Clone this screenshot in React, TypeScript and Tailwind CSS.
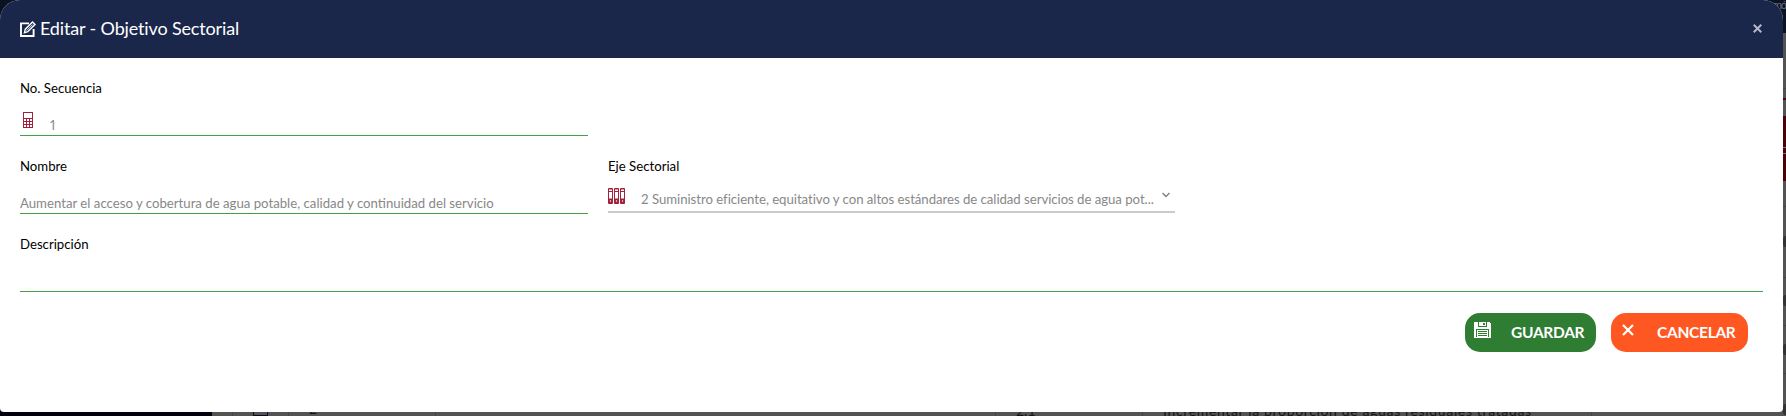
import { ReactNode } from "react";

function EditIcon() {
  return (
    <svg className="block h-4 w-4 shrink-0" viewBox="0 0 16 16" fill="none" stroke="#fff">
      <path d="M9 2.4H1V15h12.6V8" strokeWidth="1.9" />
      <path d="M4.4 11.8l.9-3.6 7.2-7.2 2.5 2.5-7.2 7.2z" strokeWidth="1.4" />
      <path d="M6.6 9.6l6-6" strokeWidth=".9" />
    </svg>
  );
}

function CalculatorIcon() {
  return (
    <svg className="block h-4 w-[10px]" viewBox="0 0 10 16" fill="none" stroke="#a3203c" shapeRendering="crispEdges">
      <rect x=".5" y=".5" width="9" height="15" />
      <path d="M0 6.5h10M0 9.5h10M0 12.5h10M3.5 6.5v9M6.5 6.5v9" />
    </svg>
  );
}

function BindersIcon() {
  return (
    <svg className="block h-4 w-[17px]" viewBox="0 0 17 16" fill="none" stroke="#a3203c">
      {[0, 6, 12].map((x) => (
        <g key={x}>
          <rect x={x + 0.5} y=".5" width="4" height="15" rx=".5" />
          <path d={`M${x} 1h5M${x} 3.5h5`} strokeWidth="1.2" />
          <path d={`M${x} 10.5h5v5h-5z`} fill="#a3203c" stroke="none" />
          <circle cx={x + 2.5} cy="13" r=".7" fill="#fff" stroke="none" />
        </g>
      ))}
    </svg>
  );
}

function SaveIcon() {
  return (
    <svg className="block h-4 w-[17px]" viewBox="0 0 17 16" shapeRendering="crispEdges">
      <path d="M0 0h15l2 2v14H0z" fill="#fff" />
      <path d="M4 0h1v5H4zM12 0h1v5h-1zM4 4h9v1H4zM9 1h2v2H9z" fill="#2e7d32" />
      <path d="M2 7h13v8H2z" fill="#2e7d32" />
      <path d="M3 8h11v7H3z" fill="#fff" />
      <path d="M4 9.5h9M4 11.5h9M4 13.5h9" stroke="#2e7d32" />
    </svg>
  );
}

function Cross({ className, width }: { className: string; width: number }) {
  return (
    <svg className={className} viewBox="0 0 12 12" fill="none" stroke="currentColor" strokeWidth={width}>
      <path d="M1 1l10 10M11 1L1 11" />
    </svg>
  );
}

function Label({ children }: { children: ReactNode }) {
  return <div className="h-5 text-[13.2px] leading-5 text-black">{children}</div>;
}

function Backdrop() {
  return (
    <div className="absolute inset-0 bg-[#535353] text-[14px] text-[#161616]">
      <div className="absolute left-0 top-0 h-[33px] w-full bg-[#0b1224]" />
      <div className="absolute left-[1773px] top-[-3px] text-[11px] leading-4 tracking-[-1.4px] text-[#6b7078]">mó</div>
      <div className="absolute right-0 top-[98px] h-[2px] w-[3px] bg-[#530014]" />
      <div className="absolute right-0 top-[116px] h-[65px] w-[3px] bg-[#4d0008]" />
      <div className="absolute right-0 top-[147px] h-[7px] w-[3px] border-y border-[#777]" />
      {[88, 206, 277, 325, 373].map((y) => (
        <div key={y} className="absolute right-0 h-px w-[3px] bg-[#434343]" style={{ top: y }} />
      ))}
      {[236, 295, 344, 404].map((y) => (
        <div key={y} className="absolute right-0 h-[11px] w-[3px] rounded-l bg-[#333]" style={{ top: y }} />
      ))}
      <div className="absolute bottom-0 left-0 h-[20px] w-[212px] bg-[#02020f]" />
      {[232, 288, 435, 995, 1142, 1591].map((x) => (
        <div key={x} className="absolute bottom-0 h-1 w-px bg-[#444]" style={{ left: x }} />
      ))}
      <div className="absolute bottom-0 left-[253px] h-[14px] w-[15px] border border-[#0b0b25]" />
      <div className="absolute bottom-[-3px] left-[309px] leading-5">2</div>
      <div className="absolute bottom-[-5px] left-[1016px] leading-5">2.1</div>
      <div className="absolute bottom-[-5px] left-[1163px] whitespace-nowrap leading-5 tracking-[0.65px]">
        Incrementar la proporción de aguas residuales tratadas
      </div>
    </div>
  );
}

export default function App() {
  return (
    <div className="relative h-[416px] w-[1786px] overflow-hidden font-['Lato',sans-serif]">
      <Backdrop />
      <div className="relative flex h-[412px] w-[1783px] flex-col overflow-hidden rounded-b-[4px] rounded-t-[20px] bg-white">
        <header className="flex h-[58px] items-center justify-between bg-[#1a264a] pb-[2px] pl-5 pr-[21px] text-white">
          <h1 className="flex items-center gap-1 text-[18px] tracking-[-0.15px]">
            <span className="pt-[2px]">
              <EditIcon />
            </span>
            Editar - Objetivo Sectorial
          </h1>
          <Cross className="h-[9px] w-[9px] text-[#b5bac8]" width={2.6} />
        </header>
        <main className="flex flex-col px-5 pt-5">
          <div className="h-[58px] w-[568px] border-b border-[#43a047]">
            <Label>No. Secuencia</Label>
            <div className="flex pl-[3px] pt-[14px]">
              <CalculatorIcon />
              <span className="pl-[17px] pt-[3px] text-[13.2px] proportional-nums leading-5 text-[#888]">1</span>
            </div>
          </div>
          <div className="mt-5 flex gap-5">
            <div className="h-[58px] w-[568px] border-b border-[#43a047]">
              <Label>Nombre</Label>
              <div className="pt-[17px] text-[13.2px] leading-5 text-[#888]">
                Aumentar el acceso y cobertura de agua potable, calidad y continuidad del servicio
              </div>
            </div>
            <div className="h-[57px] w-[567px] border-b-2 border-[#cbcbcb]">
              <Label>Eje Sectorial</Label>
              <div className="flex pt-[13px] text-[#888]">
                <div className="-mt-px">
                  <BindersIcon />
                </div>
                <span className="whitespace-nowrap pl-4 text-[13.2px] leading-5 tracking-[-0.04px]">
                  2 Suministro eficiente, equitativo y con altos estándares de calidad servicios de agua pot...
                </span>
                <svg className="ml-auto mr-[5px] mt-[3px] h-[6px] w-2" viewBox="0 0 8 6" fill="none" stroke="#808080" strokeWidth="1.4">
                  <path d="M.5 1L4 4.5 7.5 1" />
                </svg>
              </div>
            </div>
          </div>
          <div className="mt-5 h-[58px] border-b border-[#43a047]">
            <Label>Descripción</Label>
          </div>
          <div className="mt-[21px] flex gap-[15px] pl-[1445px] text-[15.5px] font-bold tracking-[-0.3px] text-white">
            <button className="flex h-[39px] w-[131px] rounded-[15px] bg-[#2e7d32] pl-[9px] pt-[9px]">
              <SaveIcon />
              <span className="pl-5 leading-[21px]">GUARDAR</span>
            </button>
            <button className="flex h-[39px] w-[137px] rounded-[15px] bg-[#ff5722] pl-[11px] pt-[9px]">
              <Cross className="mt-[2px] h-3 w-3" width={2.2} />
              <span className="pl-[23px] leading-[21px]">CANCELAR</span>
            </button>
          </div>
        </main>
      </div>
    </div>
  );
}
